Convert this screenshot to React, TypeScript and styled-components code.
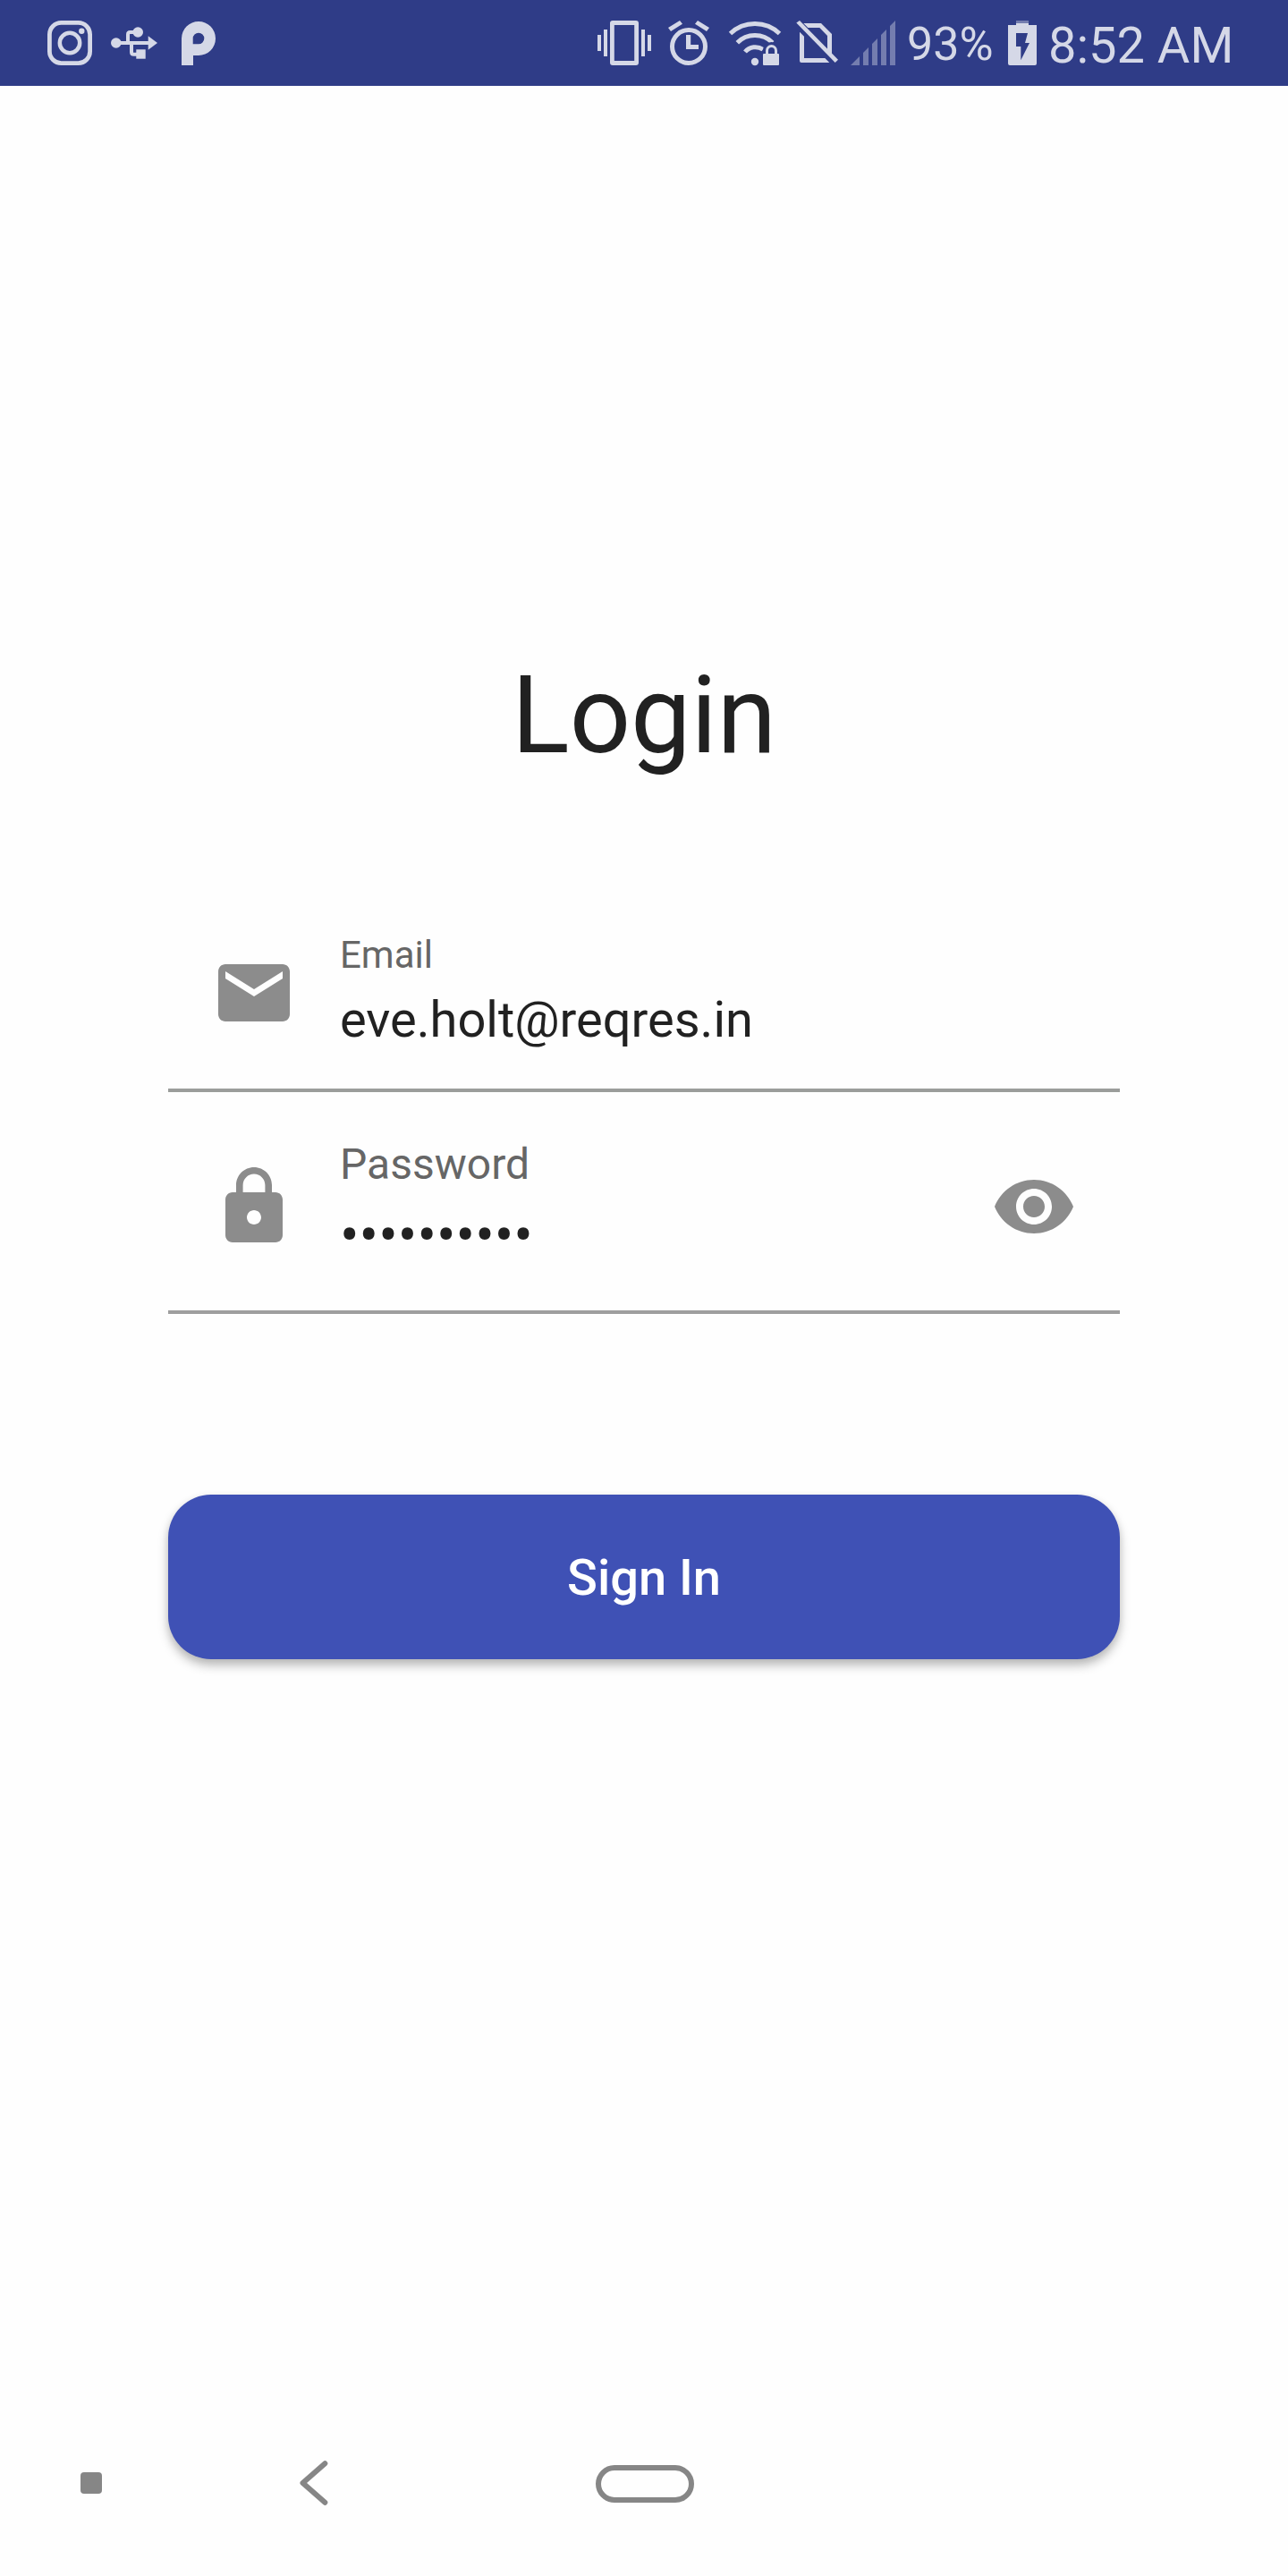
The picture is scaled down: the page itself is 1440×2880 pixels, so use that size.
import React from "react";
import styled, { createGlobalStyle } from "styled-components";

const BAR = "#2f3c87";
const ON_BAR = "#d5d8e7";
const GREY = "#8c8c8c";

const GlobalStyle = createGlobalStyle`
  * { box-sizing: border-box; }
  body {
    margin: 0;
    background: #fefefe;
    font-family: Roboto, "Noto Sans", sans-serif;
    color: #212121;
  }
`;

const Screen = styled.div`
  display: flex;
  flex-direction: column;
  width: 1440px;
  height: 2880px;
  overflow: hidden;
  background: #fefefe;
`;

const StatusBar = styled.header`
  display: flex;
  justify-content: space-between;
  height: 96px;
  padding: 0 62px 0 53px;
  background: ${BAR};
  color: ${ON_BAR};
`;

const StatusGroup = styled.div`
  display: flex;
  align-items: flex-start;
`;

const Glyph = styled.svg<{ $gap?: number; $top?: number }>`
  display: block;
  flex: none;
  margin-left: ${(p) => p.$gap ?? 0}px;
  margin-top: ${(p) => p.$top ?? 23}px;
  fill: currentColor;
  overflow: visible;
`;

const StatusText = styled.span<{ $size: number; $width: number; $top: number; $gap: number }>`
  flex: none;
  width: ${(p) => p.$width}px;
  margin-left: ${(p) => p.$gap}px;
  padding-top: ${(p) => p.$top}px;
  font-size: ${(p) => p.$size}px;
  line-height: 66px;
  white-space: nowrap;
`;

const Main = styled.main`
  flex: 1;
  display: flex;
  flex-direction: column;
  padding: 634px 188px 0;
`;

const Title = styled.h1`
  margin: 0 0 133px;
  font-size: 120px;
  font-weight: 400;
  line-height: 140px;
  text-align: center;
`;

const Field = styled.div<{ $height: number; $line: string }>`
  display: flex;
  align-items: center;
  height: ${(p) => p.$height}px;
  padding: 0 48px;
  border-bottom: 4px solid ${(p) => p.$line};

  & + & {
    margin-top: 12px;
  }
`;

const FieldIcon = styled.svg`
  display: block;
  flex: none;
  width: 96px;
  height: 96px;
  fill: ${GREY};
`;

const FieldText = styled.div<{ $top: number }>`
  flex: 1;
  align-self: flex-start;
  display: flex;
  flex-direction: column;
  padding: ${(p) => p.$top}px 0 0 48px;
`;

const Label = styled.label<{ $size: number; $line: number }>`
  font-size: ${(p) => p.$size}px;
  line-height: ${(p) => p.$line}px;
  color: #666;
`;

const Value = styled.span<{ $top: number }>`
  margin-top: ${(p) => p.$top}px;
  font-size: 56px;
  line-height: 66px;
`;

const Secret = styled(Value)`
  font-size: 64px;
`;

const EyeButton = styled.button`
  padding: 0;
  border: 0;
  background: none;
`;

const SignIn = styled.button`
  height: 184px;
  margin-top: 202px;
  padding: 2px 0 0;
  border: 0;
  border-radius: 48px;
  background: #3f51b5;
  box-shadow: 0 7px 12px rgba(0, 0, 0, 0.26), 0 2px 8px rgba(0, 0, 0, 0.06);
  color: #fff;
  font-family: inherit;
  font-size: 56px;
  font-weight: 500;
  line-height: 66px;
`;

const NavBar = styled.nav`
  display: flex;
  align-items: center;
  height: 208px;
  padding-left: 90px;
  color: #868686;
`;

const NavDot = styled.span`
  width: 24px;
  height: 24px;
  border-radius: 4px;
  background: currentColor;
`;

const NavHome = styled.span`
  width: 110px;
  height: 42px;
  margin: 2px 0 0 298.5px;
  border: 6px solid currentColor;
  border-radius: 21px;
`;

const InstagramIcon = () => (
  <Glyph width="50" height="50">
    <rect x="2.4" y="2.4" width="45.2" height="45.2" rx="13" fill="none" stroke="currentColor" strokeWidth="4.8" />
    <circle cx="25" cy="25" r="11.2" fill="none" stroke="currentColor" strokeWidth="4.5" />
    <circle cx="38.3" cy="11.7" r="3.2" />
  </Glyph>
);

const UsbIcon = () => (
  <Glyph width="52" height="36" $gap={21} $top={30}>
    <g fill="none" stroke="currentColor" strokeWidth="4">
      <path d="M5 18H43" />
      <path d="M19 18V8.5Q19 6 21.5 6H29" />
      <path d="M23 18V28.2Q23 30.7 25.5 30.7H30" />
    </g>
    <circle cx="5.8" cy="18" r="5.8" />
    <circle cx="30.2" cy="6" r="5.8" />
    <path d="M41.7 10.3L52 18L41.7 25.7Z" />
    <rect x="28.3" y="25.3" width="10.4" height="10.4" />
  </Glyph>
);

const PushIcon = () => (
  <Glyph width="38" height="49" $gap={27} $top={24} fillRule="evenodd">
    <path d="M0 49V19A19 19 0 0 1 38 19A19 19 0 0 1 19 38H13V49ZM12.7 25.3V19A6.3 6.3 0 1 1 19 25.3Z" />
  </Glyph>
);

const VibrateIcon = () => (
  <Glyph width="60" height="50">
    <path d="M0 16h4v18h-4zM7 10h4v30h-4zM49 10h4v30h-4zM56 16h4v18h-4z" />
    <path fillRule="evenodd" d="M17 0H43Q46 0 46 3V47Q46 50 43 50H17Q14 50 14 47V3Q14 0 17 0ZM18.8 5V45H41.2V5Z" />
  </Glyph>
);

const AlarmIcon = () => (
  <Glyph width="46" height="50" $gap={19}>
    <circle cx="23" cy="29" r="18.5" fill="none" stroke="currentColor" strokeWidth="5" />
    <path d="M20 16H25.2V27H34V32H20Z" />
    <path d="M0 8L13 0L16 3.7L3 12ZM46 8L33 0L30 3.7L43 12Z" />
  </Glyph>
);

const WifiLockIcon = () => (
  <Glyph width="58" height="49" $gap={22} $top={24}>
    <g fill="none" stroke="currentColor" strokeWidth="5">
      <path d="M1.5 13.5A39.9 39.9 0 0 1 56.5 13.5" />
      <path d="M9.3 23.7A27.8 27.8 0 0 1 48.7 23.7" />
      <path d="M18 34A15 15 0 0 1 38 31.3" />
    </g>
    <circle cx="29" cy="45" r="4.2" />
    <path d="M41.5 36V32.5A6 6 0 0 1 53.5 32.5V36" fill={BAR} stroke={BAR} strokeWidth="7" />
    <path d="M42.5 36.5V32.5A5 5 0 0 1 52.5 32.5V36.5" fill="none" stroke="currentColor" strokeWidth="3" />
    <rect x="38" y="36" width="18" height="13" rx="1" />
  </Glyph>
);

const NoSimIcon = () => (
  <Glyph width="47" height="47" $gap={17}>
    <path d="M0.3 2.5L4 0L47 43.7L43.7 47Z" />
    <path d="M8.3 3H28L40 15V40L35 35V17L26.3 8H13.3Z" />
    <path d="M4 12.7L9 17.7V42H32.3L37.3 47H6Q4 47 4 45Z" />
  </Glyph>
);

const SignalIcon = () => (
  <Glyph width="50" height="50" $gap={14} opacity="0.42">
    <path d="M0 50L10 40V50ZM14 36L20 30V50H14ZM24 26L30 20V50H24ZM34 16L40 10V50H34ZM44 6L50 0V50H44Z" />
  </Glyph>
);

const BatteryIcon = () => (
  <Glyph width="32" height="50">
    <path d="M9 0H23V3H9Z" opacity="0.42" />
    <path d="M9 3H23V5.5H9Z" />
    <path
      fillRule="evenodd"
      d="M0 5H32V48Q32 50 30 50H2Q0 50 0 48ZM9 14V29H14.3V44.3L24 25H19L22 14Z"
    />
  </Glyph>
);

export default function App() {
  return (
    <Screen>
      <GlobalStyle />
      <StatusBar>
        <StatusGroup>
          <InstagramIcon />
          <UsbIcon />
          <PushIcon />
        </StatusGroup>
        <StatusGroup>
          <VibrateIcon />
          <AlarmIcon />
          <WifiLockIcon />
          <NoSimIcon />
          <SignalIcon />
          <StatusText $size={52} $width={113} $top={17} $gap={13}>93%</StatusText>
          <BatteryIcon />
          <StatusText $size={56} $width={206} $top={18} $gap={13}>8:52 AM</StatusText>
        </StatusGroup>
      </StatusBar>

      <Main>
        <Title>Login</Title>

        <Field $height={218} $line="#9b9d9b">
          <FieldIcon viewBox="0 0 24 24">
            <path d="M20 4H4c-1.1 0-1.99.9-1.99 2L2 18c0 1.1.9 2 2 2h16c1.1 0 2-.9 2-2V6c0-1.1-.9-2-2-2zm0 4l-8 5-8-5V6l8 5 8-5v2z" />
          </FieldIcon>
          <FieldText $top={40}>
            <Label $size={42} $line={50}>Email</Label>
            <Value $top={14}>eve.holt@reqres.in</Value>
          </FieldText>
        </Field>

        <Field $height={236} $line="#9e9e9e">
          <FieldIcon viewBox="0 0 24 24">
            <path d="M18 8h-1V6c0-2.76-2.24-5-5-5S7 3.24 7 6v2H6c-1.1 0-2 .9-2 2v10c0 1.1.9 2 2 2h12c1.1 0 2-.9 2-2V10c0-1.1-.9-2-2-2zm-6 9c-1.1 0-2-.9-2-2s.9-2 2-2 2 .9 2 2-.9 2-2 2zm3.1-9H8.9V6c0-1.71 1.39-3.1 3.1-3.1 1.71 0 3.1 1.39 3.1 3.1v2z" />
          </FieldIcon>
          <FieldText $top={41}>
            <Label $size={48} $line={56}>Password</Label>
            <Secret $top={19}>••••••••••</Secret>
          </FieldText>
          <EyeButton aria-label="Show password">
            <FieldIcon viewBox="0 0 24 24">
              <path d="M12 4.5C7 4.5 2.73 7.61 1 12c1.73 4.39 6 7.5 11 7.5s9.27-3.11 11-7.5c-1.73-4.39-6-7.5-11-7.5zM12 17c-2.76 0-5-2.24-5-5s2.24-5 5-5 5 2.24 5 5-2.24 5-5 5zm0-8c-1.66 0-3 1.34-3 3s1.34 3 3 3 3-1.34 3-3-1.34-3-3-3z" />
            </FieldIcon>
          </EyeButton>
        </Field>

        <SignIn>Sign In</SignIn>
      </Main>

      <NavBar>
        <NavDot />
        <Glyph width="32" height="50" $gap={221} $top={0}>
          <path
            d="M28.3 3.3L3.5 25L28.3 46.7"
            fill="none"
            stroke="currentColor"
            strokeWidth="6"
            strokeLinecap="round"
            strokeLinejoin="round"
          />
        </Glyph>
        <NavHome />
      </NavBar>
    </Screen>
  );
}
